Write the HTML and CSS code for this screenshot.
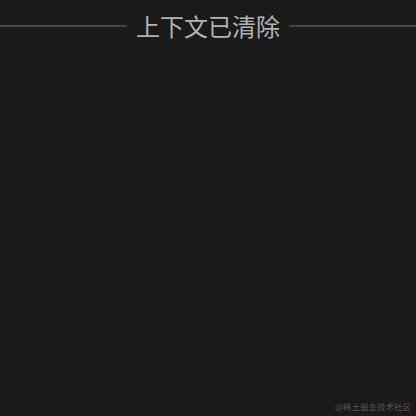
FILE: index.html
```html
<!DOCTYPE html>
<html lang="zh-CN">
<head>
    <meta charset="UTF-8">
    <meta name="viewport" content="width=device-width, initial-scale=1.0">
    <title>上下文已清除</title>
    <link rel="stylesheet" href="styles.css">
</head>
<body>
    <div class="screen">
        <div class="divider">
            <span class="divider-line"></span>
            <span class="divider-text">上下文已清除</span>
            <span class="divider-line"></span>
        </div>
        <div class="content"></div>
        <div class="watermark">@稀土掘金技术社区</div>
    </div>
</body>
</html>
```

FILE: styles.css
```css
* {
    margin: 0;
    padding: 0;
    box-sizing: border-box;
}

body {
    background-color: #1a1a1a;
    font-family: "Noto Sans CJK SC", "Noto Sans", sans-serif;
}

.screen {
    width: 416px;
    height: 416px;
    display: flex;
    flex-direction: column;
}

.divider {
    display: flex;
    align-items: center;
    gap: 9px;
    height: 36px;
    margin-top: 8px;
}

.divider-line {
    flex: 1;
    height: 2px;
    background-color: #444444;
}

.divider-text {
    color: #b3b3b3;
    font-size: 24px;
    line-height: 36px;
}

.content {
    flex: 1;
}

.watermark {
    align-self: flex-end;
    color: #555555;
    font-size: 8.5px;
    padding: 0 5px 4px 0;
    line-height: 12px;
}
```
